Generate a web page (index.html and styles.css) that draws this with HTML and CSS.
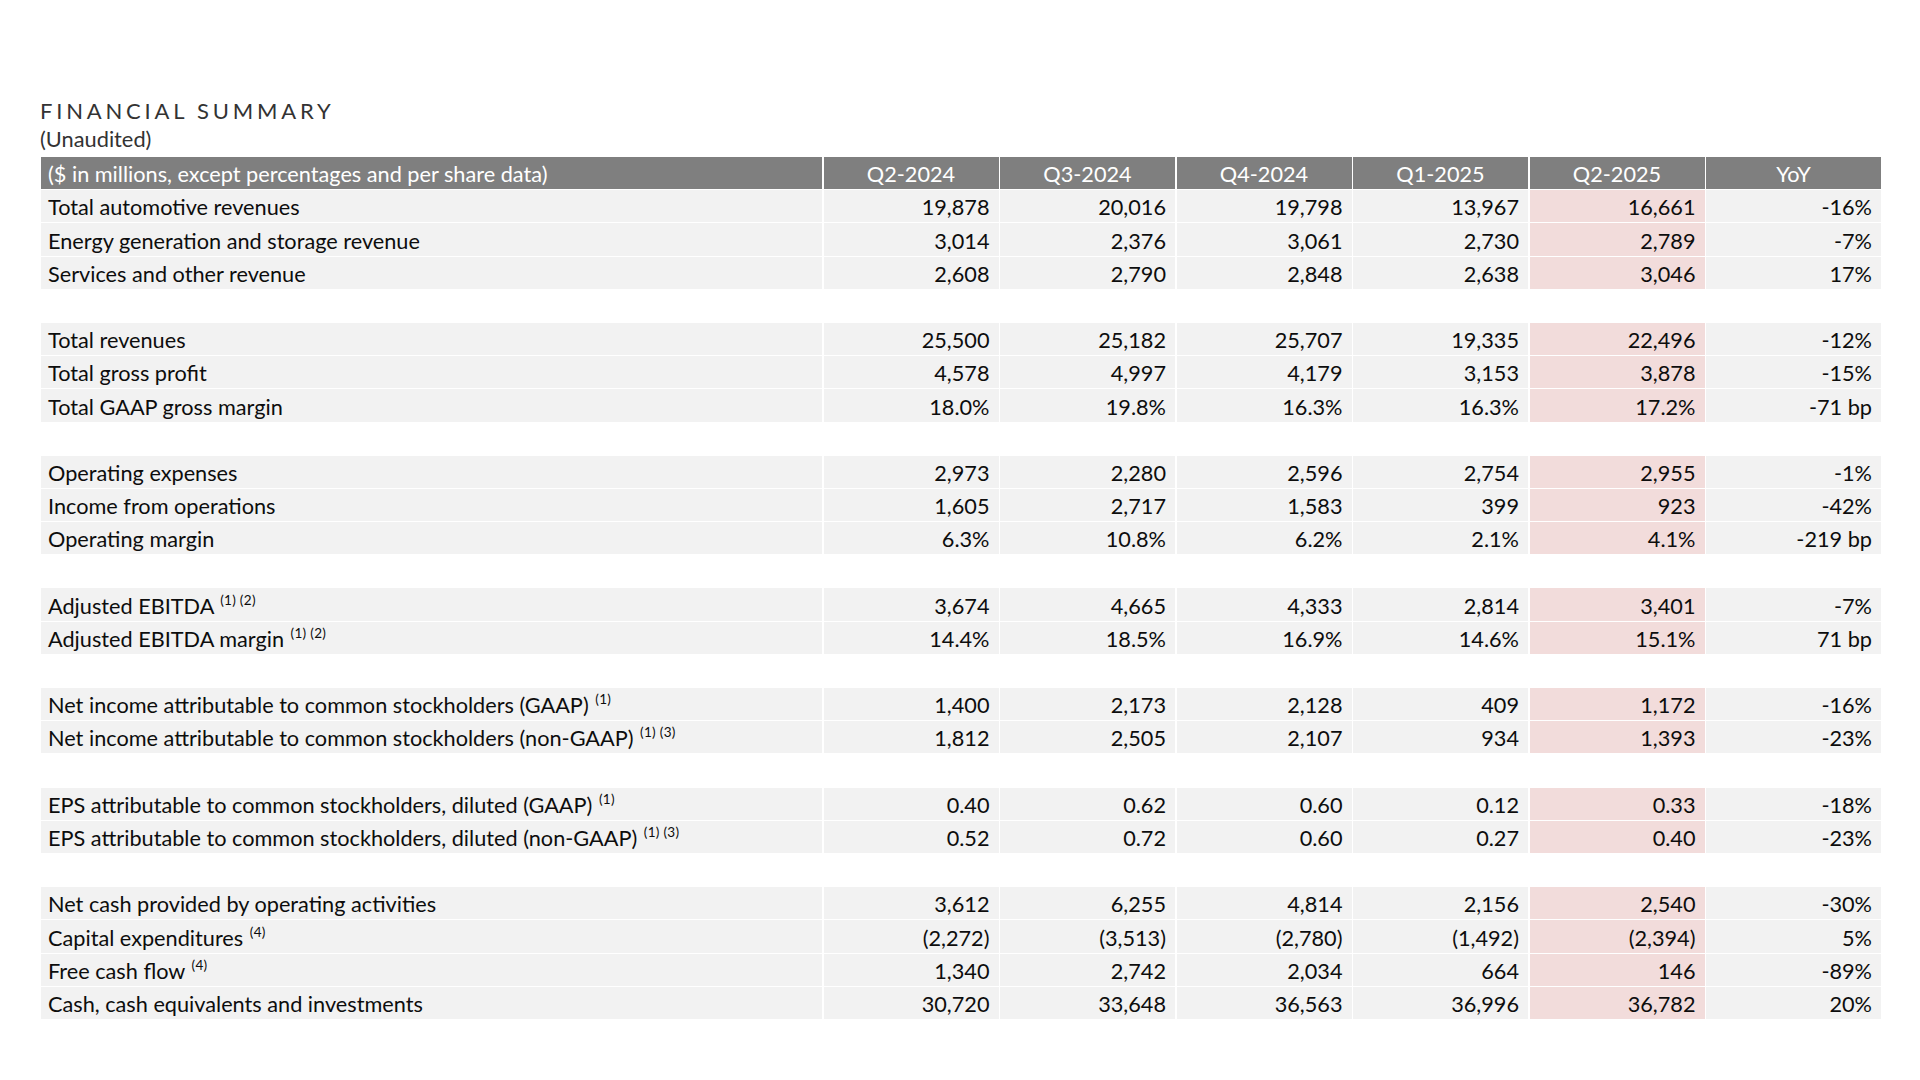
FILE: index.html
```html
<!DOCTYPE html>
<html lang="en">
<head>
<meta charset="utf-8">
<title>Financial Summary</title>
<link rel="stylesheet" href="styles.css">
</head>
<body>
<main class="page">
  <h1 class="title">FINANCIAL SUMMARY</h1>
  <p class="subtitle">(Unaudited)</p>
  <div class="fin-table">
    <div class="cell head label">($ in millions, except percentages and per share data)</div>
    <div class="cell head">Q2-2024</div>
    <div class="cell head">Q3-2024</div>
    <div class="cell head">Q4-2024</div>
    <div class="cell head">Q1-2025</div>
    <div class="cell head">Q2-2025</div>
    <div class="cell head">YoY</div>

    <div class="cell label">Total automotive revenues</div>
    <div class="cell num">19,878</div><div class="cell num">20,016</div><div class="cell num">19,798</div><div class="cell num">13,967</div><div class="cell num hl">16,661</div><div class="cell num">-16%</div>
    <div class="cell label">Energy generation and storage revenue</div>
    <div class="cell num">3,014</div><div class="cell num">2,376</div><div class="cell num">3,061</div><div class="cell num">2,730</div><div class="cell num hl">2,789</div><div class="cell num">-7%</div>
    <div class="cell label">Services and other revenue</div>
    <div class="cell num">2,608</div><div class="cell num">2,790</div><div class="cell num">2,848</div><div class="cell num">2,638</div><div class="cell num hl">3,046</div><div class="cell num">17%</div>

    <div class="spacer"></div>

    <div class="cell label">Total revenues</div>
    <div class="cell num">25,500</div><div class="cell num">25,182</div><div class="cell num">25,707</div><div class="cell num">19,335</div><div class="cell num hl">22,496</div><div class="cell num">-12%</div>
    <div class="cell label">Total gross profit</div>
    <div class="cell num">4,578</div><div class="cell num">4,997</div><div class="cell num">4,179</div><div class="cell num">3,153</div><div class="cell num hl">3,878</div><div class="cell num">-15%</div>
    <div class="cell label">Total GAAP gross margin</div>
    <div class="cell num">18.0%</div><div class="cell num">19.8%</div><div class="cell num">16.3%</div><div class="cell num">16.3%</div><div class="cell num hl">17.2%</div><div class="cell num">-71 bp</div>

    <div class="spacer"></div>

    <div class="cell label">Operating expenses</div>
    <div class="cell num">2,973</div><div class="cell num">2,280</div><div class="cell num">2,596</div><div class="cell num">2,754</div><div class="cell num hl">2,955</div><div class="cell num">-1%</div>
    <div class="cell label">Income from operations</div>
    <div class="cell num">1,605</div><div class="cell num">2,717</div><div class="cell num">1,583</div><div class="cell num">399</div><div class="cell num hl">923</div><div class="cell num">-42%</div>
    <div class="cell label">Operating margin</div>
    <div class="cell num">6.3%</div><div class="cell num">10.8%</div><div class="cell num">6.2%</div><div class="cell num">2.1%</div><div class="cell num hl">4.1%</div><div class="cell num">-219 bp</div>

    <div class="spacer"></div>

    <div class="cell label">Adjusted EBITDA <sup class="fn">(1) (2)</sup></div>
    <div class="cell num">3,674</div><div class="cell num">4,665</div><div class="cell num">4,333</div><div class="cell num">2,814</div><div class="cell num hl">3,401</div><div class="cell num">-7%</div>
    <div class="cell label">Adjusted EBITDA margin <sup class="fn">(1) (2)</sup></div>
    <div class="cell num">14.4%</div><div class="cell num">18.5%</div><div class="cell num">16.9%</div><div class="cell num">14.6%</div><div class="cell num hl">15.1%</div><div class="cell num">71 bp</div>

    <div class="spacer"></div>

    <div class="cell label">Net income attributable to common stockholders (GAAP) <sup class="fn">(1)</sup></div>
    <div class="cell num">1,400</div><div class="cell num">2,173</div><div class="cell num">2,128</div><div class="cell num">409</div><div class="cell num hl">1,172</div><div class="cell num">-16%</div>
    <div class="cell label">Net income attributable to common stockholders (non-GAAP) <sup class="fn">(1) (3)</sup></div>
    <div class="cell num">1,812</div><div class="cell num">2,505</div><div class="cell num">2,107</div><div class="cell num">934</div><div class="cell num hl">1,393</div><div class="cell num">-23%</div>

    <div class="spacer"></div>

    <div class="cell label">EPS attributable to common stockholders, diluted (GAAP) <sup class="fn">(1)</sup></div>
    <div class="cell num">0.40</div><div class="cell num">0.62</div><div class="cell num">0.60</div><div class="cell num">0.12</div><div class="cell num hl">0.33</div><div class="cell num">-18%</div>
    <div class="cell label">EPS attributable to common stockholders, diluted (non-GAAP) <sup class="fn">(1) (3)</sup></div>
    <div class="cell num">0.52</div><div class="cell num">0.72</div><div class="cell num">0.60</div><div class="cell num">0.27</div><div class="cell num hl">0.40</div><div class="cell num">-23%</div>

    <div class="spacer"></div>

    <div class="cell label">Net cash provided by operating activities</div>
    <div class="cell num">3,612</div><div class="cell num">6,255</div><div class="cell num">4,814</div><div class="cell num">2,156</div><div class="cell num hl">2,540</div><div class="cell num">-30%</div>
    <div class="cell label">Capital expenditures <sup class="fn">(4)</sup></div>
    <div class="cell num">(2,272)</div><div class="cell num">(3,513)</div><div class="cell num">(2,780)</div><div class="cell num">(1,492)</div><div class="cell num hl">(2,394)</div><div class="cell num">5%</div>
    <div class="cell label">Free cash flow <sup class="fn">(4)</sup></div>
    <div class="cell num">1,340</div><div class="cell num">2,742</div><div class="cell num">2,034</div><div class="cell num">664</div><div class="cell num hl">146</div><div class="cell num">-89%</div>
    <div class="cell label">Cash, cash equivalents and investments</div>
    <div class="cell num">30,720</div><div class="cell num">33,648</div><div class="cell num">36,563</div><div class="cell num">36,996</div><div class="cell num hl">36,782</div><div class="cell num">20%</div>
  </div>
</main>
</body>
</html>
```

FILE: styles.css
```css
html, body {
  margin: 0;
  padding: 0;
  background: #ffffff;
}

body {
  font-family: Lato, "Open Sans", "Liberation Sans", sans-serif;
  color: #0d0d0d;
}

.page {
  padding: 97px 39px 0 40px;
}

.title {
  margin: 0;
  font-size: 22px;
  font-weight: 400;
  line-height: 28px;
  letter-spacing: 3.8px;
  color: #333333;
}

.subtitle {
  margin: 0;
  font-size: 21.8px;
  line-height: 28px;
  color: #333333;
}

.fin-table {
  margin: 4px 0 0 1px;
  display: grid;
  grid-template-columns: 781px repeat(6, 175px);
  grid-auto-rows: 32.2px;
  column-gap: 1.5px;
  row-gap: 1px;
  font-size: 21.7px;
}

.cell {
  box-sizing: border-box;
  padding: 5.2px 9px 0 7px;
  line-height: 24px;
  background: #f2f2f2;
  white-space: nowrap;
  text-align: right;
  overflow: hidden;
}

.cell.label {
  text-align: left;
}

.cell.head {
  background: #7f7f7f;
  color: #ffffff;
  text-align: center;
  padding-left: 0;
  padding-right: 0;
  padding-top: 4.8px;
}

.cell.head.label {
  text-align: left;
  padding-left: 7px;
}

.cell.hl {
  background: #f2dcdb;
}

.spacer {
  grid-column: 1 / -1;
}

.fn {
  font-size: 13.5px;
  letter-spacing: 0.3px;
  line-height: 0;
  vertical-align: 9px;
  margin-left: 1px;
}
```
